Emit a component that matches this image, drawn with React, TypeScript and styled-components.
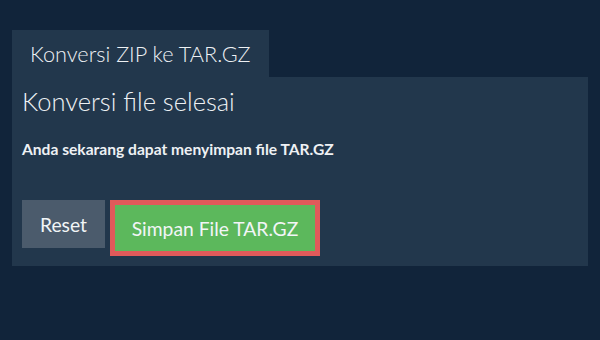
import React from 'react'
import styled, { createGlobalStyle } from 'styled-components'

const GlobalStyle = createGlobalStyle`
  html, body {
    margin: 0;
    padding: 0;
    background: #11243a;
  }
  body {
    font-family: Lato, "Noto Sans", sans-serif;
    color: #eef1f4;
  }
`

const App = () => {
  return (
    <>
      <GlobalStyle />
      <Page>
        <Tabs>
          <Tab>Konversi ZIP ke TAR.GZ</Tab>
        </Tabs>
        <Panel>
          <Heading>Konversi file selesai</Heading>
          <Message>Anda sekarang dapat menyimpan file TAR.GZ</Message>
          <Actions>
            <ResetButton>Reset</ResetButton>
            <SaveButton>Simpan File TAR.GZ</SaveButton>
          </Actions>
        </Panel>
      </Page>
    </>
  )
}

export default App

const Page = styled.div`
  width: 600px;
  height: 340px;
  box-sizing: border-box;
  padding: 30px 12px 0 12px;
  display: flex;
  flex-direction: column;
`

const Tabs = styled.div`
  display: flex;
`

const Tab = styled.div`
  height: 47px;
  box-sizing: border-box;
  padding: 0 18px;
  display: flex;
  align-items: center;
  background: #22374c;
  font-size: 21.7px;
  font-weight: 300;
  color: #eef1f4;
`

const Panel = styled.div`
  background: #22374c;
  height: 189px;
  box-sizing: border-box;
  padding: 9px 10px 0 10px;
  display: flex;
  flex-direction: column;
`

const Heading = styled.h2`
  margin: 0;
  font-weight: 300;
  font-size: 25.5px;
  line-height: 30px;
`

const Message = styled.p`
  margin: 24px 0 0 0;
  font-weight: 700;
  font-size: 15.6px;
  line-height: 18px;
`

const Actions = styled.div`
  display: flex;
  align-items: flex-start;
  gap: 5px;
  margin-top: 42px;
`

const ButtonBase = styled.button`
  padding: 0;
  font-family: Lato, "Noto Sans", sans-serif;
  font-size: 19.3px;
  font-weight: 400;
  color: #f2f5f7;
  cursor: pointer;
`

const ResetButton = styled(ButtonBase)`
  width: 83px;
  height: 48px;
  border: none;
  background: #4b5b6c;
`

const SaveButton = styled(ButtonBase)`
  width: 210px;
  height: 56px;
  border: 5px solid #e05a5a;
  background: #5cb85c;
`
